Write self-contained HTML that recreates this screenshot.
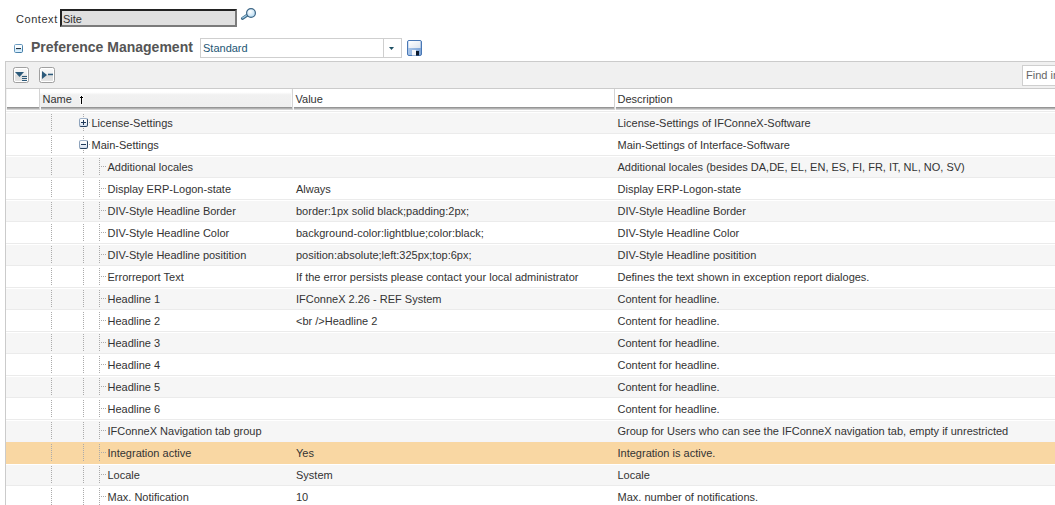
<!DOCTYPE html>
<html><head><meta charset="utf-8"><style>
html,body{margin:0;padding:0;background:#fff;}
body{width:1055px;height:505px;overflow:hidden;position:relative;font-family:"Liberation Sans",sans-serif;color:#333;}
.a{position:absolute;}
.lbl{position:absolute;left:16px;top:11px;font-size:11px;letter-spacing:0.55px;line-height:16px;color:#333;}
.ctx{position:absolute;left:60px;top:9px;width:173px;height:14px;border:2px solid;border-color:#222 #7b7b7b #7b7b7b #222;background:#e0e0e0;}
.ctx span{position:absolute;left:1px;top:0px;font-size:11px;line-height:16px;color:#333;}
.pm{position:absolute;left:31px;top:37px;font-size:14px;font-weight:bold;line-height:20px;color:#555;}
.dd{position:absolute;left:200px;top:38px;width:200px;height:18px;border:1px solid #cfcfcf;background:#fff;}
.dd span{position:absolute;left:2px;top:1px;font-size:11px;line-height:16px;color:#1d5674;}
.dd .sep{position:absolute;left:182px;top:0;width:1px;height:18px;background:#cfcfcf;}
.tbar{position:absolute;left:5px;top:61px;width:1100px;height:26px;border-top:1px solid #cbcbcb;border-bottom:1px solid #cbcbcb;border-left:1px solid #cbcbcb;background:#f0f0f0;}
.btn{position:absolute;top:67px;width:14px;height:14px;border:1px solid #a0a0a0;border-radius:2.5px;background:linear-gradient(#fafafa,#f0f0f0 45%,#dedede 55%,#e6e6e6);box-shadow:inset 0 0 0 1px #fff;}
.find{position:absolute;left:1022px;top:65px;width:60px;height:19px;border:1px solid #cfcfcf;background:#fff;}
.find span{position:absolute;left:3px;top:1px;font-size:11px;line-height:16px;color:#666;}
.lborder{position:absolute;left:5px;top:88px;width:1px;height:420px;background:#cbcbcb;}
.hdr{position:absolute;left:6px;top:89px;width:1100px;height:18px;background:#fff;}
.hc{position:absolute;top:0;height:18px;}
.hc span{position:absolute;left:2.5px;top:1px;font-size:11px;line-height:18px;color:#333;}
.row{position:absolute;left:6px;width:1100px;height:20px;border-top:1px solid #fff;border-bottom:1px solid #ebebeb;background:#fff;}
.row.odd{background:#f6f6f6;}
.row.sel{background:#f9d7a3;border-color:#f9d7a3;}
.row.presel{border-bottom-color:#f4f4fa;}
.row i{position:absolute;width:1px;height:1px;background:#ababab;}
.row .t{position:absolute;top:0;font-size:11px;line-height:20px;white-space:nowrap;color:#333;}
.tb{position:absolute;width:7px;height:7px;border:1px solid;border-color:#9fb2c9 #2b4666 #26415f #8fa4bd;border-radius:2px;background:linear-gradient(#fff,#f4f7fb 40%,#d3deee);}
.tb:before{content:"";position:absolute;left:1px;top:3px;width:5px;height:1px;background:#1f3a5a;}
.tb.plus:after{content:"";position:absolute;left:3px;top:1px;width:1px;height:5px;background:#1f3a5a;}
</style></head><body>
<div class="lbl">Context</div>
<div class="ctx"><span>Site</span></div>
<svg class="a" style="left:240px;top:6px" width="18" height="16" viewBox="0 0 18 16">
 <defs><radialGradient id="mg" cx="0.4" cy="0.35" r="0.7"><stop offset="0" stop-color="#fff"/><stop offset="1" stop-color="#b2d9f2"/></radialGradient></defs>
 <line x1="2.4" y1="12.4" x2="7.5" y2="9" stroke="#3f6a88" stroke-width="3" stroke-linecap="round"/>
 <line x1="2.6" y1="12" x2="7.5" y2="8.8" stroke="#9fcbe6" stroke-width="1.2" stroke-linecap="round"/>
 <circle cx="11" cy="7" r="4.4" fill="url(#mg)" stroke="#3d6686" stroke-width="1.2"/>
</svg>
<svg class="a" style="left:14px;top:44px" width="9" height="9" viewBox="0 0 9 9">
 <defs><linearGradient id="cg" x1="0" y1="0" x2="0" y2="1"><stop offset="0" stop-color="#fff"/><stop offset="0.45" stop-color="#f6fbff"/><stop offset="0.6" stop-color="#cfeafc"/><stop offset="1" stop-color="#e2f3fe"/></linearGradient>
 <linearGradient id="cs" x1="0" y1="0" x2="1" y2="1"><stop offset="0" stop-color="#78a6c9"/><stop offset="1" stop-color="#3a76a2"/></linearGradient></defs>
 <rect x="0.5" y="0.5" width="8" height="8" rx="1.2" fill="url(#cg)" stroke="url(#cs)"/>
 <rect x="2" y="4" width="5" height="1.1" fill="#263340"/>
</svg>
<div class="pm">Preference Management</div>
<div class="dd"><span>Standard</span><div class="sep"></div>
 <svg class="a" style="left:187.5px;top:8px" width="6" height="4" viewBox="0 0 6 4"><path d="M0 0H5L2.5 3Z" fill="#1d4f63"/></svg>
</div>
<svg class="a" style="left:407px;top:40px" width="15" height="16" viewBox="0 0 15 16">
 <defs><linearGradient id="sg" x1="0" y1="0" x2="1" y2="1"><stop offset="0" stop-color="#fff"/><stop offset="1" stop-color="#dde4ee"/></linearGradient>
 <linearGradient id="bg2" x1="0" y1="0" x2="1" y2="0"><stop offset="0" stop-color="#a9c6ea"/><stop offset="1" stop-color="#7ea4d6"/></linearGradient></defs>
 <rect x="0.5" y="0.5" width="14" height="15" rx="1.5" fill="url(#bg2)" stroke="#4a78b5"/>
 <rect x="1.5" y="1" width="12" height="7" fill="url(#sg)"/>
 <rect x="5" y="10" width="4" height="5.5" fill="#f4f6fa"/>
 <rect x="9" y="11" width="3" height="4.5" fill="#0c1a2c"/>
</svg>
<div class="tbar"></div>
<div class="btn" style="left:13px"><svg class="a" style="left:0;top:0" width="14" height="14" viewBox="0 0 14 14"><path d="M1 4H10L5.5 9Z" fill="#2c5a7a"/><rect x="8" y="8" width="5" height="1" fill="#2c5a7a"/><rect x="8" y="10" width="5" height="1" fill="#2c5a7a"/><rect x="8" y="12" width="5" height="1" fill="#2c5a7a"/></svg></div>
<div class="btn" style="left:39px"><svg class="a" style="left:0;top:0" width="14" height="14" viewBox="0 0 14 14"><path d="M2 3V11L7 7Z" fill="#2c5a7a"/><rect x="8" y="5.7" width="5" height="1.5" fill="#2c5a7a"/></svg></div>
<div class="find"><span>Find in</span></div>
<div class="hdr">
 <div class="hc" style="left:0;width:33px;background:#fff"></div>
 <div class="hc" style="left:33px;width:1px;background:#d4d4d4"></div>
 <div class="hc" style="left:34px;width:252px;background:linear-gradient(#fff,#fff 18%,#f1f1f1 32%,#efefef);box-shadow:inset -1px 0 0 #fafafa"><span>Name</span>
  <svg class="a" style="left:38px;top:6px" width="7" height="11" viewBox="0 0 7 11" shape-rendering="crispEdges"><rect x="2" y="0" width="3" height="10" fill="#fff" opacity="0.6"/><rect x="1" y="1" width="5" height="3" fill="#fff" opacity="0.6"/><rect x="3" y="1" width="1" height="8" fill="#000"/><rect x="2" y="2" width="3" height="1" fill="#000"/><rect x="1.6" y="2.4" width="3.8" height="0.8" fill="#000" opacity="0.5"/></svg></div>
 <div class="hc" style="left:286px;width:1px;background:#d4d4d4"></div>
 <div class="hc" style="left:287px;width:321px;background:#fff"><span>Value</span></div>
 <div class="hc" style="left:608px;width:1px;background:#d4d4d4"></div>
 <div class="hc" style="left:609px;width:500px;background:#fff"><span>Description</span></div>
</div>
<div class="a" style="left:7px;top:107px;width:1100px;height:1px;background:#959595"></div>
<div class="a" style="left:7px;top:108px;width:1100px;height:1px;background:#b2b2b2"></div>
<div class="a" style="left:7px;top:109px;width:1100px;height:1px;background:#d3d3d3"></div>
<div class="a" style="left:6px;top:110px;width:1100px;height:1px;background:#fff"></div>
<div class="a" style="left:6px;top:111px;width:1100px;height:1px;background:#ececec"></div>
<div class="a" style="left:39px;top:107px;width:1px;height:3px;background:#d4d4d4"></div>
<div class="a" style="left:40px;top:107px;width:1px;height:3px;background:#f4f4f4"></div>
<div class="a" style="left:292px;top:107px;width:1px;height:3px;background:#d4d4d4"></div>
<div class="a" style="left:293px;top:107px;width:1px;height:3px;background:#f4f4f4"></div>
<div class="a" style="left:614px;top:107px;width:1px;height:3px;background:#d4d4d4"></div>
<div class="a" style="left:615px;top:107px;width:1px;height:3px;background:#f4f4f4"></div>
<div class="lborder"></div>
<div class="a" style="left:6px;top:89px;width:1px;height:21px;background:#f2f2f2"></div>
<div class="row odd" style="top:112px"><i style="left:45px;top:1px"></i><i style="left:45px;top:3px"></i><i style="left:45px;top:5px"></i><i style="left:45px;top:7px"></i><i style="left:45px;top:9px"></i><i style="left:45px;top:11px"></i><i style="left:45px;top:13px"></i><i style="left:45px;top:15px"></i><i style="left:45px;top:17px"></i><i style="left:77px;top:1px"></i><i style="left:77px;top:3px"></i><i style="left:77px;top:15px"></i><i style="left:77px;top:17px"></i><i style="left:83px;top:9px"></i><b class="tb plus" style="left:73px;top:5px"></b><span class="t" style="left:85.5px">License-Settings</span><span class="t" style="left:611.5px">License-Settings of IFConneX-Software</span></div><div class="row" style="top:134px"><i style="left:45px;top:1px"></i><i style="left:45px;top:3px"></i><i style="left:45px;top:5px"></i><i style="left:45px;top:7px"></i><i style="left:45px;top:9px"></i><i style="left:45px;top:11px"></i><i style="left:45px;top:13px"></i><i style="left:45px;top:15px"></i><i style="left:45px;top:17px"></i><i style="left:77px;top:1px"></i><i style="left:77px;top:3px"></i><i style="left:77px;top:15px"></i><i style="left:77px;top:17px"></i><i style="left:83px;top:9px"></i><b class="tb minus" style="left:73px;top:5px"></b><span class="t" style="left:85.5px">Main-Settings</span><span class="t" style="left:611.5px">Main-Settings of Interface-Software</span></div><div class="row odd" style="top:156px"><i style="left:45px;top:1px"></i><i style="left:45px;top:3px"></i><i style="left:45px;top:5px"></i><i style="left:45px;top:7px"></i><i style="left:45px;top:9px"></i><i style="left:45px;top:11px"></i><i style="left:45px;top:13px"></i><i style="left:45px;top:15px"></i><i style="left:45px;top:17px"></i><i style="left:77px;top:1px"></i><i style="left:77px;top:3px"></i><i style="left:77px;top:5px"></i><i style="left:77px;top:7px"></i><i style="left:77px;top:9px"></i><i style="left:77px;top:11px"></i><i style="left:77px;top:13px"></i><i style="left:77px;top:15px"></i><i style="left:77px;top:17px"></i><i style="left:93px;top:1px"></i><i style="left:93px;top:3px"></i><i style="left:93px;top:5px"></i><i style="left:93px;top:7px"></i><i style="left:93px;top:9px"></i><i style="left:93px;top:11px"></i><i style="left:93px;top:13px"></i><i style="left:93px;top:15px"></i><i style="left:93px;top:17px"></i><i style="left:95px;top:9px"></i><i style="left:97px;top:9px"></i><i style="left:99px;top:9px"></i><span class="t" style="left:101.5px">Additional locales</span><span class="t" style="left:611.5px">Additional locales (besides DA,DE, EL, EN, ES, FI, FR, IT, NL, NO, SV)</span></div><div class="row" style="top:178px"><i style="left:45px;top:1px"></i><i style="left:45px;top:3px"></i><i style="left:45px;top:5px"></i><i style="left:45px;top:7px"></i><i style="left:45px;top:9px"></i><i style="left:45px;top:11px"></i><i style="left:45px;top:13px"></i><i style="left:45px;top:15px"></i><i style="left:45px;top:17px"></i><i style="left:77px;top:1px"></i><i style="left:77px;top:3px"></i><i style="left:77px;top:5px"></i><i style="left:77px;top:7px"></i><i style="left:77px;top:9px"></i><i style="left:77px;top:11px"></i><i style="left:77px;top:13px"></i><i style="left:77px;top:15px"></i><i style="left:77px;top:17px"></i><i style="left:93px;top:1px"></i><i style="left:93px;top:3px"></i><i style="left:93px;top:5px"></i><i style="left:93px;top:7px"></i><i style="left:93px;top:9px"></i><i style="left:93px;top:11px"></i><i style="left:93px;top:13px"></i><i style="left:93px;top:15px"></i><i style="left:93px;top:17px"></i><i style="left:95px;top:9px"></i><i style="left:97px;top:9px"></i><i style="left:99px;top:9px"></i><span class="t" style="left:101.5px">Display ERP-Logon-state</span><span class="t" style="left:290px">Always</span><span class="t" style="left:611.5px">Display ERP-Logon-state</span></div><div class="row odd" style="top:200px"><i style="left:45px;top:1px"></i><i style="left:45px;top:3px"></i><i style="left:45px;top:5px"></i><i style="left:45px;top:7px"></i><i style="left:45px;top:9px"></i><i style="left:45px;top:11px"></i><i style="left:45px;top:13px"></i><i style="left:45px;top:15px"></i><i style="left:45px;top:17px"></i><i style="left:77px;top:1px"></i><i style="left:77px;top:3px"></i><i style="left:77px;top:5px"></i><i style="left:77px;top:7px"></i><i style="left:77px;top:9px"></i><i style="left:77px;top:11px"></i><i style="left:77px;top:13px"></i><i style="left:77px;top:15px"></i><i style="left:77px;top:17px"></i><i style="left:93px;top:1px"></i><i style="left:93px;top:3px"></i><i style="left:93px;top:5px"></i><i style="left:93px;top:7px"></i><i style="left:93px;top:9px"></i><i style="left:93px;top:11px"></i><i style="left:93px;top:13px"></i><i style="left:93px;top:15px"></i><i style="left:93px;top:17px"></i><i style="left:95px;top:9px"></i><i style="left:97px;top:9px"></i><i style="left:99px;top:9px"></i><span class="t" style="left:101.5px">DIV-Style Headline Border</span><span class="t" style="left:290px">border:1px solid black;padding:2px;</span><span class="t" style="left:611.5px">DIV-Style Headline Border</span></div><div class="row" style="top:222px"><i style="left:45px;top:1px"></i><i style="left:45px;top:3px"></i><i style="left:45px;top:5px"></i><i style="left:45px;top:7px"></i><i style="left:45px;top:9px"></i><i style="left:45px;top:11px"></i><i style="left:45px;top:13px"></i><i style="left:45px;top:15px"></i><i style="left:45px;top:17px"></i><i style="left:77px;top:1px"></i><i style="left:77px;top:3px"></i><i style="left:77px;top:5px"></i><i style="left:77px;top:7px"></i><i style="left:77px;top:9px"></i><i style="left:77px;top:11px"></i><i style="left:77px;top:13px"></i><i style="left:77px;top:15px"></i><i style="left:77px;top:17px"></i><i style="left:93px;top:1px"></i><i style="left:93px;top:3px"></i><i style="left:93px;top:5px"></i><i style="left:93px;top:7px"></i><i style="left:93px;top:9px"></i><i style="left:93px;top:11px"></i><i style="left:93px;top:13px"></i><i style="left:93px;top:15px"></i><i style="left:93px;top:17px"></i><i style="left:95px;top:9px"></i><i style="left:97px;top:9px"></i><i style="left:99px;top:9px"></i><span class="t" style="left:101.5px">DIV-Style Headline Color</span><span class="t" style="left:290px">background-color:lightblue;color:black;</span><span class="t" style="left:611.5px">DIV-Style Headline Color</span></div><div class="row odd" style="top:244px"><i style="left:45px;top:1px"></i><i style="left:45px;top:3px"></i><i style="left:45px;top:5px"></i><i style="left:45px;top:7px"></i><i style="left:45px;top:9px"></i><i style="left:45px;top:11px"></i><i style="left:45px;top:13px"></i><i style="left:45px;top:15px"></i><i style="left:45px;top:17px"></i><i style="left:77px;top:1px"></i><i style="left:77px;top:3px"></i><i style="left:77px;top:5px"></i><i style="left:77px;top:7px"></i><i style="left:77px;top:9px"></i><i style="left:77px;top:11px"></i><i style="left:77px;top:13px"></i><i style="left:77px;top:15px"></i><i style="left:77px;top:17px"></i><i style="left:93px;top:1px"></i><i style="left:93px;top:3px"></i><i style="left:93px;top:5px"></i><i style="left:93px;top:7px"></i><i style="left:93px;top:9px"></i><i style="left:93px;top:11px"></i><i style="left:93px;top:13px"></i><i style="left:93px;top:15px"></i><i style="left:93px;top:17px"></i><i style="left:95px;top:9px"></i><i style="left:97px;top:9px"></i><i style="left:99px;top:9px"></i><span class="t" style="left:101.5px">DIV-Style Headline positition</span><span class="t" style="left:290px">position:absolute;left:325px;top:6px;</span><span class="t" style="left:611.5px">DIV-Style Headline positition</span></div><div class="row" style="top:266px"><i style="left:45px;top:1px"></i><i style="left:45px;top:3px"></i><i style="left:45px;top:5px"></i><i style="left:45px;top:7px"></i><i style="left:45px;top:9px"></i><i style="left:45px;top:11px"></i><i style="left:45px;top:13px"></i><i style="left:45px;top:15px"></i><i style="left:45px;top:17px"></i><i style="left:77px;top:1px"></i><i style="left:77px;top:3px"></i><i style="left:77px;top:5px"></i><i style="left:77px;top:7px"></i><i style="left:77px;top:9px"></i><i style="left:77px;top:11px"></i><i style="left:77px;top:13px"></i><i style="left:77px;top:15px"></i><i style="left:77px;top:17px"></i><i style="left:93px;top:1px"></i><i style="left:93px;top:3px"></i><i style="left:93px;top:5px"></i><i style="left:93px;top:7px"></i><i style="left:93px;top:9px"></i><i style="left:93px;top:11px"></i><i style="left:93px;top:13px"></i><i style="left:93px;top:15px"></i><i style="left:93px;top:17px"></i><i style="left:95px;top:9px"></i><i style="left:97px;top:9px"></i><i style="left:99px;top:9px"></i><span class="t" style="left:101.5px">Errorreport Text</span><span class="t" style="left:290px">If the error persists please contact your local administrator</span><span class="t" style="left:611.5px">Defines the text shown in exception report dialoges.</span></div><div class="row odd" style="top:288px"><i style="left:45px;top:1px"></i><i style="left:45px;top:3px"></i><i style="left:45px;top:5px"></i><i style="left:45px;top:7px"></i><i style="left:45px;top:9px"></i><i style="left:45px;top:11px"></i><i style="left:45px;top:13px"></i><i style="left:45px;top:15px"></i><i style="left:45px;top:17px"></i><i style="left:77px;top:1px"></i><i style="left:77px;top:3px"></i><i style="left:77px;top:5px"></i><i style="left:77px;top:7px"></i><i style="left:77px;top:9px"></i><i style="left:77px;top:11px"></i><i style="left:77px;top:13px"></i><i style="left:77px;top:15px"></i><i style="left:77px;top:17px"></i><i style="left:93px;top:1px"></i><i style="left:93px;top:3px"></i><i style="left:93px;top:5px"></i><i style="left:93px;top:7px"></i><i style="left:93px;top:9px"></i><i style="left:93px;top:11px"></i><i style="left:93px;top:13px"></i><i style="left:93px;top:15px"></i><i style="left:93px;top:17px"></i><i style="left:95px;top:9px"></i><i style="left:97px;top:9px"></i><i style="left:99px;top:9px"></i><span class="t" style="left:101.5px">Headline 1</span><span class="t" style="left:290px">IFConneX 2.26 - REF System</span><span class="t" style="left:611.5px">Content for headline.</span></div><div class="row" style="top:310px"><i style="left:45px;top:1px"></i><i style="left:45px;top:3px"></i><i style="left:45px;top:5px"></i><i style="left:45px;top:7px"></i><i style="left:45px;top:9px"></i><i style="left:45px;top:11px"></i><i style="left:45px;top:13px"></i><i style="left:45px;top:15px"></i><i style="left:45px;top:17px"></i><i style="left:77px;top:1px"></i><i style="left:77px;top:3px"></i><i style="left:77px;top:5px"></i><i style="left:77px;top:7px"></i><i style="left:77px;top:9px"></i><i style="left:77px;top:11px"></i><i style="left:77px;top:13px"></i><i style="left:77px;top:15px"></i><i style="left:77px;top:17px"></i><i style="left:93px;top:1px"></i><i style="left:93px;top:3px"></i><i style="left:93px;top:5px"></i><i style="left:93px;top:7px"></i><i style="left:93px;top:9px"></i><i style="left:93px;top:11px"></i><i style="left:93px;top:13px"></i><i style="left:93px;top:15px"></i><i style="left:93px;top:17px"></i><i style="left:95px;top:9px"></i><i style="left:97px;top:9px"></i><i style="left:99px;top:9px"></i><span class="t" style="left:101.5px">Headline 2</span><span class="t" style="left:290px">&lt;br /&gt;Headline 2</span><span class="t" style="left:611.5px">Content for headline.</span></div><div class="row odd" style="top:332px"><i style="left:45px;top:1px"></i><i style="left:45px;top:3px"></i><i style="left:45px;top:5px"></i><i style="left:45px;top:7px"></i><i style="left:45px;top:9px"></i><i style="left:45px;top:11px"></i><i style="left:45px;top:13px"></i><i style="left:45px;top:15px"></i><i style="left:45px;top:17px"></i><i style="left:77px;top:1px"></i><i style="left:77px;top:3px"></i><i style="left:77px;top:5px"></i><i style="left:77px;top:7px"></i><i style="left:77px;top:9px"></i><i style="left:77px;top:11px"></i><i style="left:77px;top:13px"></i><i style="left:77px;top:15px"></i><i style="left:77px;top:17px"></i><i style="left:93px;top:1px"></i><i style="left:93px;top:3px"></i><i style="left:93px;top:5px"></i><i style="left:93px;top:7px"></i><i style="left:93px;top:9px"></i><i style="left:93px;top:11px"></i><i style="left:93px;top:13px"></i><i style="left:93px;top:15px"></i><i style="left:93px;top:17px"></i><i style="left:95px;top:9px"></i><i style="left:97px;top:9px"></i><i style="left:99px;top:9px"></i><span class="t" style="left:101.5px">Headline 3</span><span class="t" style="left:611.5px">Content for headline.</span></div><div class="row" style="top:354px"><i style="left:45px;top:1px"></i><i style="left:45px;top:3px"></i><i style="left:45px;top:5px"></i><i style="left:45px;top:7px"></i><i style="left:45px;top:9px"></i><i style="left:45px;top:11px"></i><i style="left:45px;top:13px"></i><i style="left:45px;top:15px"></i><i style="left:45px;top:17px"></i><i style="left:77px;top:1px"></i><i style="left:77px;top:3px"></i><i style="left:77px;top:5px"></i><i style="left:77px;top:7px"></i><i style="left:77px;top:9px"></i><i style="left:77px;top:11px"></i><i style="left:77px;top:13px"></i><i style="left:77px;top:15px"></i><i style="left:77px;top:17px"></i><i style="left:93px;top:1px"></i><i style="left:93px;top:3px"></i><i style="left:93px;top:5px"></i><i style="left:93px;top:7px"></i><i style="left:93px;top:9px"></i><i style="left:93px;top:11px"></i><i style="left:93px;top:13px"></i><i style="left:93px;top:15px"></i><i style="left:93px;top:17px"></i><i style="left:95px;top:9px"></i><i style="left:97px;top:9px"></i><i style="left:99px;top:9px"></i><span class="t" style="left:101.5px">Headline 4</span><span class="t" style="left:611.5px">Content for headline.</span></div><div class="row odd" style="top:376px"><i style="left:45px;top:1px"></i><i style="left:45px;top:3px"></i><i style="left:45px;top:5px"></i><i style="left:45px;top:7px"></i><i style="left:45px;top:9px"></i><i style="left:45px;top:11px"></i><i style="left:45px;top:13px"></i><i style="left:45px;top:15px"></i><i style="left:45px;top:17px"></i><i style="left:77px;top:1px"></i><i style="left:77px;top:3px"></i><i style="left:77px;top:5px"></i><i style="left:77px;top:7px"></i><i style="left:77px;top:9px"></i><i style="left:77px;top:11px"></i><i style="left:77px;top:13px"></i><i style="left:77px;top:15px"></i><i style="left:77px;top:17px"></i><i style="left:93px;top:1px"></i><i style="left:93px;top:3px"></i><i style="left:93px;top:5px"></i><i style="left:93px;top:7px"></i><i style="left:93px;top:9px"></i><i style="left:93px;top:11px"></i><i style="left:93px;top:13px"></i><i style="left:93px;top:15px"></i><i style="left:93px;top:17px"></i><i style="left:95px;top:9px"></i><i style="left:97px;top:9px"></i><i style="left:99px;top:9px"></i><span class="t" style="left:101.5px">Headline 5</span><span class="t" style="left:611.5px">Content for headline.</span></div><div class="row" style="top:398px"><i style="left:45px;top:1px"></i><i style="left:45px;top:3px"></i><i style="left:45px;top:5px"></i><i style="left:45px;top:7px"></i><i style="left:45px;top:9px"></i><i style="left:45px;top:11px"></i><i style="left:45px;top:13px"></i><i style="left:45px;top:15px"></i><i style="left:45px;top:17px"></i><i style="left:77px;top:1px"></i><i style="left:77px;top:3px"></i><i style="left:77px;top:5px"></i><i style="left:77px;top:7px"></i><i style="left:77px;top:9px"></i><i style="left:77px;top:11px"></i><i style="left:77px;top:13px"></i><i style="left:77px;top:15px"></i><i style="left:77px;top:17px"></i><i style="left:93px;top:1px"></i><i style="left:93px;top:3px"></i><i style="left:93px;top:5px"></i><i style="left:93px;top:7px"></i><i style="left:93px;top:9px"></i><i style="left:93px;top:11px"></i><i style="left:93px;top:13px"></i><i style="left:93px;top:15px"></i><i style="left:93px;top:17px"></i><i style="left:95px;top:9px"></i><i style="left:97px;top:9px"></i><i style="left:99px;top:9px"></i><span class="t" style="left:101.5px">Headline 6</span><span class="t" style="left:611.5px">Content for headline.</span></div><div class="row odd presel" style="top:420px"><i style="left:45px;top:1px"></i><i style="left:45px;top:3px"></i><i style="left:45px;top:5px"></i><i style="left:45px;top:7px"></i><i style="left:45px;top:9px"></i><i style="left:45px;top:11px"></i><i style="left:45px;top:13px"></i><i style="left:45px;top:15px"></i><i style="left:45px;top:17px"></i><i style="left:77px;top:1px"></i><i style="left:77px;top:3px"></i><i style="left:77px;top:5px"></i><i style="left:77px;top:7px"></i><i style="left:77px;top:9px"></i><i style="left:77px;top:11px"></i><i style="left:77px;top:13px"></i><i style="left:77px;top:15px"></i><i style="left:77px;top:17px"></i><i style="left:93px;top:1px"></i><i style="left:93px;top:3px"></i><i style="left:93px;top:5px"></i><i style="left:93px;top:7px"></i><i style="left:93px;top:9px"></i><i style="left:93px;top:11px"></i><i style="left:93px;top:13px"></i><i style="left:93px;top:15px"></i><i style="left:93px;top:17px"></i><i style="left:95px;top:9px"></i><i style="left:97px;top:9px"></i><i style="left:99px;top:9px"></i><span class="t" style="left:101.5px">IFConneX Navigation tab group</span><span class="t" style="left:611.5px">Group for Users who can see the IFConneX navigation tab, empty if unrestricted</span></div><div class="row sel" style="top:442px"><i style="left:45px;top:1px"></i><i style="left:45px;top:3px"></i><i style="left:45px;top:5px"></i><i style="left:45px;top:7px"></i><i style="left:45px;top:9px"></i><i style="left:45px;top:11px"></i><i style="left:45px;top:13px"></i><i style="left:45px;top:15px"></i><i style="left:45px;top:17px"></i><i style="left:77px;top:1px"></i><i style="left:77px;top:3px"></i><i style="left:77px;top:5px"></i><i style="left:77px;top:7px"></i><i style="left:77px;top:9px"></i><i style="left:77px;top:11px"></i><i style="left:77px;top:13px"></i><i style="left:77px;top:15px"></i><i style="left:77px;top:17px"></i><i style="left:93px;top:1px"></i><i style="left:93px;top:3px"></i><i style="left:93px;top:5px"></i><i style="left:93px;top:7px"></i><i style="left:93px;top:9px"></i><i style="left:93px;top:11px"></i><i style="left:93px;top:13px"></i><i style="left:93px;top:15px"></i><i style="left:93px;top:17px"></i><i style="left:95px;top:9px"></i><i style="left:97px;top:9px"></i><i style="left:99px;top:9px"></i><span class="t" style="left:101.5px">Integration active</span><span class="t" style="left:290px">Yes</span><span class="t" style="left:611.5px">Integration is active.</span></div><div class="row odd" style="top:464px"><i style="left:45px;top:1px"></i><i style="left:45px;top:3px"></i><i style="left:45px;top:5px"></i><i style="left:45px;top:7px"></i><i style="left:45px;top:9px"></i><i style="left:45px;top:11px"></i><i style="left:45px;top:13px"></i><i style="left:45px;top:15px"></i><i style="left:45px;top:17px"></i><i style="left:77px;top:1px"></i><i style="left:77px;top:3px"></i><i style="left:77px;top:5px"></i><i style="left:77px;top:7px"></i><i style="left:77px;top:9px"></i><i style="left:77px;top:11px"></i><i style="left:77px;top:13px"></i><i style="left:77px;top:15px"></i><i style="left:77px;top:17px"></i><i style="left:93px;top:1px"></i><i style="left:93px;top:3px"></i><i style="left:93px;top:5px"></i><i style="left:93px;top:7px"></i><i style="left:93px;top:9px"></i><i style="left:93px;top:11px"></i><i style="left:93px;top:13px"></i><i style="left:93px;top:15px"></i><i style="left:93px;top:17px"></i><i style="left:95px;top:9px"></i><i style="left:97px;top:9px"></i><i style="left:99px;top:9px"></i><span class="t" style="left:101.5px">Locale</span><span class="t" style="left:290px">System</span><span class="t" style="left:611.5px">Locale</span></div><div class="row" style="top:486px"><i style="left:45px;top:1px"></i><i style="left:45px;top:3px"></i><i style="left:45px;top:5px"></i><i style="left:45px;top:7px"></i><i style="left:45px;top:9px"></i><i style="left:45px;top:11px"></i><i style="left:45px;top:13px"></i><i style="left:45px;top:15px"></i><i style="left:45px;top:17px"></i><i style="left:77px;top:1px"></i><i style="left:77px;top:3px"></i><i style="left:77px;top:5px"></i><i style="left:77px;top:7px"></i><i style="left:77px;top:9px"></i><i style="left:77px;top:11px"></i><i style="left:77px;top:13px"></i><i style="left:77px;top:15px"></i><i style="left:77px;top:17px"></i><i style="left:93px;top:1px"></i><i style="left:93px;top:3px"></i><i style="left:93px;top:5px"></i><i style="left:93px;top:7px"></i><i style="left:93px;top:9px"></i><i style="left:93px;top:11px"></i><i style="left:93px;top:13px"></i><i style="left:93px;top:15px"></i><i style="left:93px;top:17px"></i><i style="left:95px;top:9px"></i><i style="left:97px;top:9px"></i><i style="left:99px;top:9px"></i><span class="t" style="left:101.5px">Max. Notification</span><span class="t" style="left:290px">10</span><span class="t" style="left:611.5px">Max. number of notifications.</span></div>
</body></html>
